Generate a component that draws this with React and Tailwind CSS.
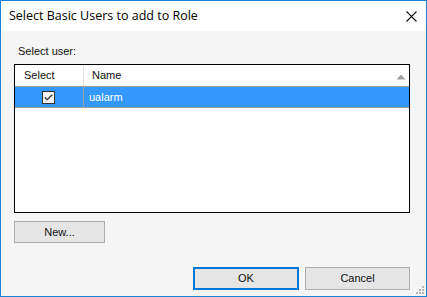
export default function App() {
  const font = { fontFamily: '"Liberation Sans", Arial, sans-serif' };
  return (
    <div className="w-[427px] h-[297px] bg-white flex" style={font}>
      <div className="relative w-[427px] h-[297px] border border-[#1883d7] flex flex-col bg-[#f5f5f5]">
        {/* Title bar */}
        <div className="h-[30px] bg-white flex items-center pl-[8px] pr-[9px] shrink-0">
          <span className="text-[12.5px] text-black leading-none mt-[1px] flex-1" style={{ fontFamily: '"Open Sans", "Liberation Sans", sans-serif' }}>
            Select Basic Users to add to Role
          </span>
          <svg width="11" height="11" viewBox="0 0 11 11">
            <path d="M0.5 0.5 L10.5 10.5 M10.5 0.5 L0.5 10.5" stroke="#111" strokeWidth="1.1" fill="none" />
          </svg>
        </div>
        {/* Body */}
        <div className="flex-1 flex flex-col pl-[13px] pr-[16px]">
          <div className="mt-[14px] ml-[4px] h-[13px] text-[11px] leading-[13px] text-[#111]">Select user:</div>
          <div className="mt-[6px] h-[149px] border border-black bg-white flex flex-col">
            {/* header */}
            <div className="h-[22px] flex border-b border-[#a0a0a0] text-[11px] text-[#111]">
              <div className="w-[69px] border-r border-[#e3e3e3] flex items-center pl-[9px]">Select</div>
              <div className="flex-1 flex items-center pl-[8px] relative">
                Name
                <svg width="10" height="6" viewBox="0 0 10 6" className="absolute right-[3px] top-[9px]">
                  <path d="M5 0.5 L9.5 5.5 L0.5 5.5 Z" fill="#a0a0a0" />
                </svg>
              </div>
            </div>
            {/* selected row */}
            <div className="h-[21px] flex border-b border-[#a0a0a0] bg-[#3399ff] text-[11px] text-white">
              <div className="w-[69px] border-r border-[#a0a0a0] flex items-center justify-center">
                <div className="w-[13px] h-[13px] border border-[#333] bg-[#f4f4f4] flex items-center justify-center ml-[-1px]">
                  <svg width="9" height="7" viewBox="0 0 9 7">
                    <path d="M0.8 3.2 L3.2 5.6 L8.2 0.8" stroke="#333" strokeWidth="1.3" fill="none" />
                  </svg>
                </div>
              </div>
              <div className="flex-1 flex items-center pl-[5px]">ualarm</div>
            </div>
          </div>
          <div className="mt-[8px] w-[91px] h-[22px] border border-[#adadad] bg-[#e5e5e5] flex items-center justify-center text-[11px] text-[#111]">
            New...
          </div>
          <div className="flex-1" />
          <div className="flex justify-end gap-[6px] mb-[6px]">
            <div className="w-[106px] h-[23px] border-2 border-[#0078d7] bg-[#e5e5e5] flex items-center justify-center text-[11px] text-[#111]">OK</div>
            <div className="w-[105px] h-[23px] border border-[#adadad] bg-[#e5e5e5] flex items-center justify-center text-[11px] text-[#111]">Cancel</div>
          </div>
        </div>
        {/* size grip */}
        <svg width="9" height="9" viewBox="0 0 9 9" className="absolute right-[2px] bottom-[2px]">
          <rect x="7" y="1" width="2" height="2" fill="#b8b8b8" />
          <rect x="4" y="4" width="2" height="2" fill="#b8b8b8" />
          <rect x="7" y="4" width="2" height="2" fill="#b8b8b8" />
          <rect x="1" y="7" width="2" height="2" fill="#b8b8b8" />
          <rect x="4" y="7" width="2" height="2" fill="#b8b8b8" />
          <rect x="7" y="7" width="2" height="2" fill="#b8b8b8" />
        </svg>
      </div>
    </div>
  );
}
